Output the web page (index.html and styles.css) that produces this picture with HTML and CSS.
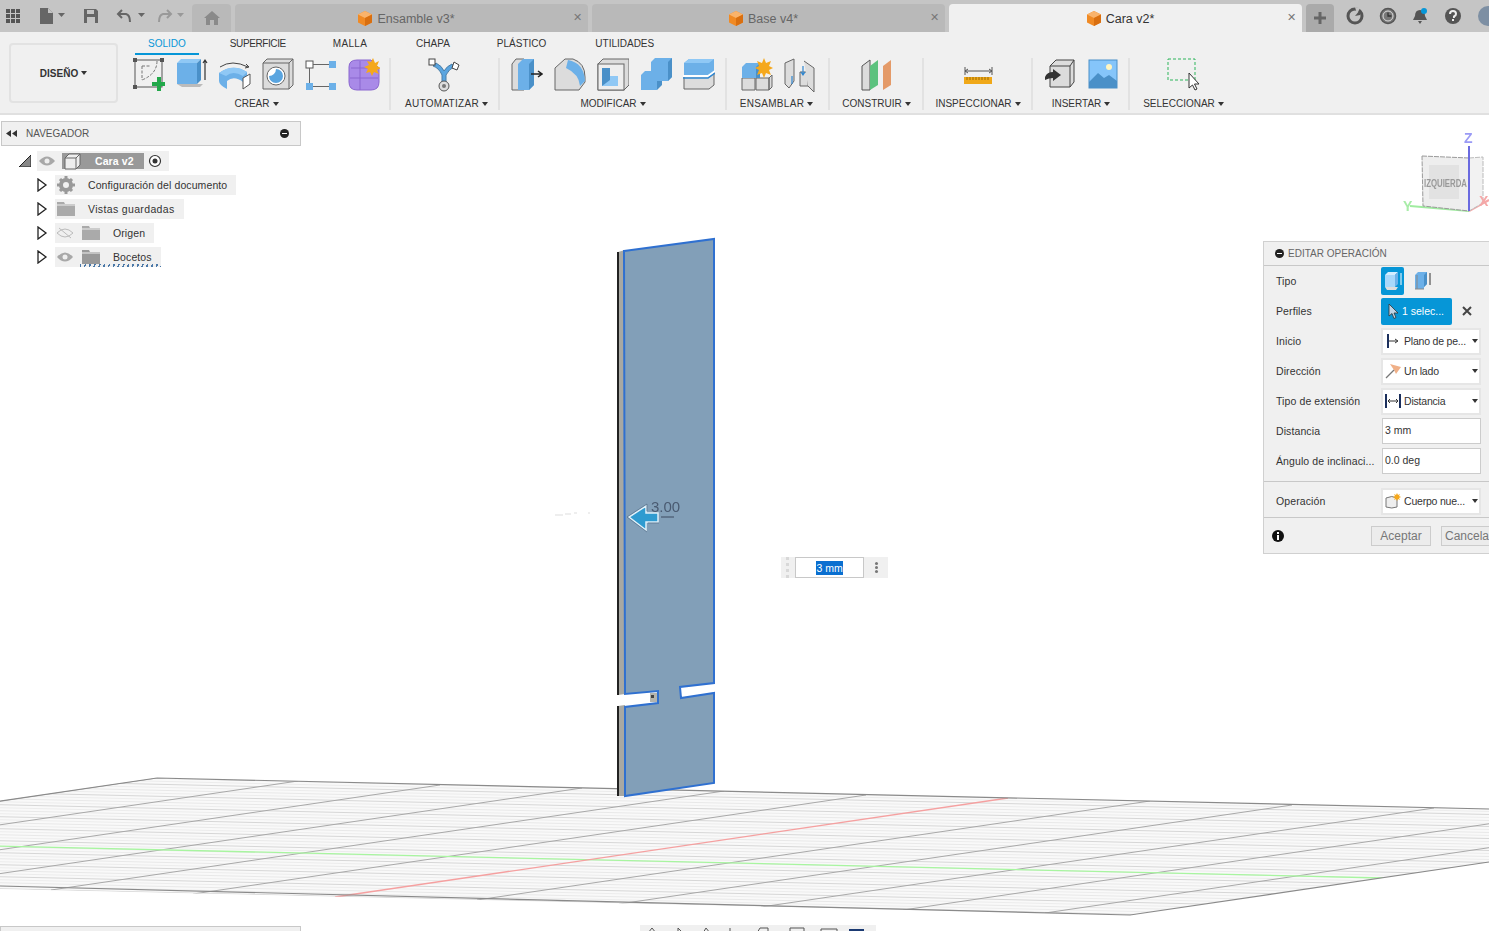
FILE: index.html
```html
<!DOCTYPE html>
<html lang="es">

<head>
    <meta charset="utf-8">
    <meta name="viewport" content="width=device-width, initial-scale=1.0">
    <title>Cara v2</title>
    <link rel="stylesheet" href="styles.css">
</head>

<body>
    <header class="titlebar">
        <div class="quick">
            <svg class="q-grid" width="16" height="16" viewBox="0 0 16 16"><g fill="#555"><rect x="1" y="1" width="4" height="4"/><rect x="6" y="1" width="4" height="4"/><rect x="11" y="1" width="4" height="4"/><rect x="1" y="6" width="4" height="4"/><rect x="6" y="6" width="4" height="4"/><rect x="11" y="6" width="4" height="4"/><rect x="1" y="11" width="4" height="4"/><rect x="6" y="11" width="4" height="4"/><rect x="11" y="11" width="4" height="4"/></g></svg>
            <svg class="q-file" width="28" height="16" viewBox="0 0 28 16"><path d="M1 0h8l5 5v11H1z" fill="#666"/><path d="M9 0v5h5z" fill="#c4c4c4"/><path d="M19 5h7l-3.500 4z" fill="#666"/></svg>
            <svg class="q-save" width="16" height="16" viewBox="0 0 16 16"><path d="M1 1h12l2 2v12H1z" fill="#666"/><rect x="4" y="2" width="7" height="4" fill="#c4c4c4"/><rect x="4" y="9" width="8" height="6" fill="#c4c4c4"/></svg>
            <svg class="q-undo" width="30" height="16" viewBox="0 0 30 16"><path d="M6 2 2 6l4 4M2 6h8q4 1 4 8" fill="none" stroke="#666" stroke-width="2"/><path d="M22 5h7l-3.500 4z" fill="#666"/></svg>
            <svg class="q-redo" width="30" height="16" viewBox="0 0 30 16"><path d="M10 2l4 4-4 4M14 6H6q-4 1-4 8" fill="none" stroke="#999" stroke-width="2"/><path d="M20 5h7l-3.500 4z" fill="#999"/></svg>
        </div>
        <div class="tabs">
            <div class="tab tab-home">
                <svg width="16" height="14" viewBox="0 0 16 14"><path d="M8 0 0 7h2v7h4V9h4v5h4V7h2z" fill="#8a8a8a"/></svg>
            </div>
            <div class="tab tab-doc">
                <span class="tab-name"><svg class="cube" width="14" height="15" viewBox="0 0 14 15"><path d="M7 0l7 3.500v8L7 15 0 11.500v-8z" fill="#f08a24"/><path d="M7 0l7 3.500L7 7 0 3.500z" fill="#f9b36b"/><path d="M7 7v8l7-3.500v-8z" fill="#d96f10"/></svg>Ensamble v3*</span>
                <span class="tab-x">✕</span>
            </div>
            <div class="tab tab-doc">
                <span class="tab-name"><svg class="cube" width="14" height="15" viewBox="0 0 14 15"><path d="M7 0l7 3.500v8L7 15 0 11.500v-8z" fill="#f08a24"/><path d="M7 0l7 3.500L7 7 0 3.500z" fill="#f9b36b"/><path d="M7 7v8l7-3.500v-8z" fill="#d96f10"/></svg>Base v4*</span>
                <span class="tab-x">✕</span>
            </div>
            <div class="tab tab-doc tab-active">
                <span class="tab-name"><svg class="cube" width="14" height="15" viewBox="0 0 14 15"><path d="M7 0l7 3.500v8L7 15 0 11.500v-8z" fill="#f08a24"/><path d="M7 0l7 3.500L7 7 0 3.500z" fill="#f9b36b"/><path d="M7 7v8l7-3.500v-8z" fill="#d96f10"/></svg>Cara v2*</span>
                <span class="tab-x">✕</span>
            </div>
            <div class="tab tab-plus">
                <svg width="12" height="12" viewBox="0 0 12 12"><path d="M6 0v12M0 6h12" stroke="#666" stroke-width="3"/></svg>
            </div>
        </div>
        <div class="account">
            <svg width="18" height="18" viewBox="0 0 18 18"><circle cx="9" cy="9" r="7" fill="none" stroke="#555" stroke-width="3"/><path d="M9 0l5 1-3 6z" fill="#c4c4c4"/><path d="M9 9l5-6v5z" fill="#555"/></svg>
            <svg width="18" height="18" viewBox="0 0 18 18"><circle cx="9" cy="9" r="7.500" fill="#777" stroke="#555" stroke-width="1.500"/><circle cx="9" cy="9" r="5" fill="none" stroke="#ddd"/><path d="M9 5.500V9h3.500" fill="none" stroke="#333" stroke-width="1.300"/></svg>
            <svg width="18" height="18" viewBox="0 0 18 18"><path d="M9 3q-5 0-5 6l-2 4h14l-2-4q0-6-5-6zM7 14h4l-2 3z" fill="#555"/><circle cx="13" cy="4" r="3" fill="#0696d7"/></svg>
            <svg width="18" height="18" viewBox="0 0 18 18"><circle cx="9" cy="9" r="8" fill="#555"/><path d="M6 7q0-3 3-3t3 3q0 1.500-2 2.500V11" fill="none" stroke="#eee" stroke-width="2"/><rect x="8" y="12" width="2" height="2" fill="#eee"/></svg>
            <span class="avatar"></span>
        </div>
    </header>

    <section class="ribbon">
        <div class="design-wrap">
            <div class="design-btn">DISEÑO<i class="caret"></i></div>
        </div>
        <div class="ribbon-main">
            <nav class="rtabs">
                <span class="rtab rtab-on">SOLIDO</span>
                <span class="rtab rtab-sup">SUPERFICIE</span>
                <span class="rtab rtab-malla">MALLA</span>
                <span class="rtab rtab-push">CHAPA</span>
                <span class="rtab">PLÁSTICO</span>
                <span class="rtab rtab-push">UTILIDADES</span>
            </nav>
            <div class="groups">
                <div class="group g-crear">
                    <div class="icons">
                        <svg width="32" height="34" viewBox="0 0 32 34"><rect x="2" y="2" width="27" height="27" fill="none" stroke="#555"/><g fill="#555"><rect x="0" y="0" width="4" height="4"/><rect x="27" y="0" width="4" height="4"/><rect x="0" y="27" width="4" height="4"/></g><path d="M9 8v14M9 8h9M24 3q0 13-15 19" fill="none" stroke="#777" stroke-dasharray="3 1.500"/><path d="M26 19v14M19 26h14" stroke="#22a84a" stroke-width="4"/></svg>
                        <svg width="32" height="34" viewBox="0 0 32 34"><path d="M1 26l5 3h18l3-3z" fill="#bbb"/><rect x="1" y="5" width="20" height="21" fill="#6cb0e8"/><path d="M1 5l4-4h20l-4 4z" fill="#8fc8f5"/><path d="M21 5l4-4v21l-4 4z" fill="#4a90c8"/><path d="M29 22V3M27 5l2-3 2 3" fill="none" stroke="#333" stroke-width="1.200"/></svg>
                        <svg width="32" height="34" viewBox="0 0 32 34"><path d="M0 15Q14 5 28 14V22L24 24Q15 17 8 23V31Q0 27 0 23z" fill="#6cb0e8"/><path d="M0 15Q14 5 28 14L24 18Q14 12 7 18z" fill="#8fc8f5"/><path d="M24 20 31 16V26L24 31z" fill="#fff" stroke="#555"/><path d="M1 9Q13 1 29 9M27 6l3 3-4 1" fill="none" stroke="#444"/></svg>
                        <svg width="32" height="34" viewBox="0 0 32 34"><path d="M1 5l4-4h26v26l-4 4H1z" fill="#dcdcdc" stroke="#666"/><path d="M1 5h26v26M27 5l4-4" fill="none" stroke="#666"/><circle cx="14" cy="18" r="9" fill="#fff" stroke="#666"/><path d="M7 18a7 7 0 1 0 7-7 7 7 0 0 1-7 7z" fill="#5aa5e0"/></svg>
                        <svg width="32" height="34" viewBox="0 0 32 34"><rect x="1" y="3" width="7" height="7" fill="#fff" stroke="#555"/><rect x="24" y="3" width="7" height="7" fill="#6cb0e8"/><rect x="1" y="25" width="7" height="7" fill="#6cb0e8"/><rect x="24" y="25" width="7" height="7" fill="#6cb0e8"/><path d="M8 6.500h16M4.500 10v15M8 28.500h16" stroke="#666"/></svg>
                        <svg width="32" height="34" viewBox="0 0 32 34"><path d="M1 9q0-7 8-7h14l8 8v14q0 8-8 8H9q-8 0-8-8z" fill="#a98ae8" stroke="#8a66cf"/><path d="M12 3v29M2 20h28M3 10h26" stroke="#8a66cf" fill="none"/><path d="M25 0l2 5 4-2-2 5 4 2-4 2 2 4-5-2-2 4-2-4-4 1 2-4-4-2 5-2-2-4 4 1z" fill="#f5a81c"/></svg>
                    </div>
                    <span class="group-label">CREAR<i class="caret"></i></span>
                </div>
                <div class="group g-auto">
                    <div class="icons">
                        <svg width="34" height="34" viewBox="0 0 34 34"><path d="M5 8q6 2 9 9v8h4v-8q3-6 8-8l-2-3q-5 2-8 7-2-5-8-8z" fill="#5aa5e0" stroke="#4a7ea8"/><rect x="1" y="1" width="6" height="6" fill="#fff" stroke="#444"/><path d="M26 4l5 3-2 5-5-2z" fill="#fff" stroke="#444"/><circle cx="16" cy="28" r="5" fill="#ddd" stroke="#555"/><circle cx="16" cy="28" r="2" fill="#777"/></svg>
                    </div>
                    <span class="group-label label-auto">AUTOMATIZAR<i class="caret"></i></span>
                </div>
                <div class="group g-mod">
                    <div class="icons">
                        <svg width="32" height="34" viewBox="0 0 32 34"><path d="M1 6l4-5h8v31H1z" fill="#dcdcdc" stroke="#666"/><path d="M7 6l5-5h11v26l-5 5H7z" fill="#6cb0e8"/><path d="M18 6l5-5v26l-5 5z" fill="#4a90c8"/><path d="M20 16h10M27 13l4 3-4 3" fill="none" stroke="#222" stroke-width="1.500"/></svg>
                        <svg width="32" height="34" viewBox="0 0 32 34"><path d="M1 10l10-9h8q12 4 12 18v5l-6 8H1z" fill="#dcdcdc" stroke="#666"/><path d="M14 2q16 3 17 21l-5 5q-1-12-14-18z" fill="#6cb0e8"/></svg>
                        <svg width="32" height="34" viewBox="0 0 32 34"><path d="M1 6l5-5h26v26l-5 5H1z" fill="#dcdcdc" stroke="#666"/><rect x="1" y="6" width="26" height="26" fill="#eee" stroke="#666"/><path d="M5 10h8v8h8v10H5z" fill="#8fc8f5"/><path d="M5 10h8v12l-8 6z" fill="#4a90c8"/></svg>
                        <svg width="32" height="34" viewBox="0 0 32 34"><path d="M1 17l4-4h12v19H1z" fill="#6cb0e8"/><path d="M11 4l4-4h17v19l-4 4H11z" fill="#6cb0e8"/><path d="M28 4l4-4v19l-4 4z" fill="#4a90c8"/><path d="M17 23h5v4l-5 5z" fill="#4a90c8"/></svg>
                        <svg width="32" height="34" viewBox="0 0 32 34"><path d="M1 17h25l5-4v14l-5 4H1z" fill="#dcdcdc" stroke="#666"/><path d="M1 5l5-4h25v14l-5 4H1z" fill="#6cb0e8"/><path d="M1 5l5-4h25l-5 4z" fill="#8fc8f5"/><path d="M0 18h25l7-5" fill="none" stroke="#fff" stroke-width="2"/><path d="M0 20h25l7-5" fill="none" stroke="#2f86d0" stroke-width="1.500"/></svg>
                    </div>
                    <span class="group-label">MODIFICAR<i class="caret"></i></span>
                </div>
                <div class="group g-ens">
                    <div class="icons">
                        <svg width="32" height="34" viewBox="0 0 32 34"><path d="M1 20h13v12H1zM15 20h13v12H15zM28 20l3-3v12l-3 3z" fill="#dcdcdc" stroke="#666"/><path d="M1 9l4-4h14v15H1z" fill="#6cb0e8"/><path d="M15 9l4-4v15h-4z" fill="#4a90c8"/><path d="M23 0l2 5 5-2-2 5 4 2-4 2 2 5-5-2-2 5-2-5-5 2 2-5-4-2 4-2-2-5 5 2z" fill="#f5a81c"/></svg>
                        <svg width="32" height="34" viewBox="0 0 32 34"><path d="M1 5l9-4v22l-5 7-4-4zM16 14h8v14h-8z" fill="#dcdcdc" stroke="#666"/><path d="M20 3l10 7v24l-6-6" fill="#dcdcdc" stroke="#666"/><path d="M8 18v8M19 8v8M17 14l2 3 2-3" fill="none" stroke="#2f86d0" stroke-width="1.200"/></svg>
                    </div>
                    <span class="group-label label-ens">ENSAMBLAR<i class="caret"></i></span>
                </div>
                <div class="group g-cons">
                    <div class="icons">
                        <svg width="32" height="34" viewBox="0 0 32 34"><path d="M1 8l8-6v30H1z" fill="#dcdcdc" stroke="#555"/><path d="M9 8l8-6v25l-8 5z" fill="#5cc27e"/><path d="M22 8l8-6v25l-8 5z" fill="#e49a68"/></svg>
                    </div>
                    <span class="group-label">CONSTRUIR<i class="caret"></i></span>
                </div>
                <div class="group g-insp">
                    <div class="icons">
                        <svg width="32" height="34" viewBox="0 0 32 34"><path d="M3 9v8M30 9v8M3 13h27M6 11l-3 2 3 2M27 11l3 2-3 2" fill="none" stroke="#555"/><rect x="2" y="19" width="28" height="7" fill="#f0a818"/><path d="M5 19v3M8 19v3M11 19v3M14 19v3M17 19v3M20 19v3M23 19v3M26 19v3" stroke="#9a6a00"/></svg>
                    </div>
                    <span class="group-label">INSPECCIONAR<i class="caret"></i></span>
                </div>
                <div class="group g-ins">
                    <div class="icons">
                        <svg width="32" height="34" viewBox="0 0 32 34"><path d="M6 8l6-6h18v22l-4 5H6z" fill="#dcdcdc" stroke="#444"/><path d="M6 8h20v21M26 8l4-6" fill="none" stroke="#444"/><path d="M1 19q2-5 8-5v-3l8 6-8 6v-3q-4 0-8 2z" fill="#333"/></svg>
                        <svg width="32" height="34" viewBox="0 0 32 34"><rect x="2" y="2" width="28" height="28" fill="#85c5fa" stroke="#4a90c8"/><path d="M2 24l9-9 6 5 5-3 8 6v7H2z" fill="#4a90c8"/><circle cx="22" cy="9" r="3" fill="#fff5c0"/></svg>
                    </div>
                    <span class="group-label">INSERTAR<i class="caret"></i></span>
                </div>
                <div class="group g-sel">
                    <div class="icons">
                        <svg width="34" height="34" viewBox="0 0 34 34"><rect x="1" y="1" width="27" height="21" fill="none" stroke="#2db55a" stroke-dasharray="3 2"/><path d="M22 15v15l3.500-3 2.500 5 2-1-2.500-5h4.500z" fill="#fff" stroke="#333"/></svg>
                    </div>
                    <span class="group-label">SELECCIONAR<i class="caret"></i></span>
                </div>
            </div>
        </div>
    </section>

    <main class="viewport">
        <svg class="scene" width="1489" height="816" viewBox="0 115 1489 816">
            <defs>
                <pattern id="hatch" width="60" height="12" patternUnits="userSpaceOnUse" patternTransform="rotate(1.300)">
                    <rect width="60" height="12" fill="#f9f9f9"/>
                    <rect width="60" height="1" fill="#d6d6d6"/>
                    <rect y="3" width="60" height="1" fill="#ececec"/>
                    <rect y="6" width="60" height="1" fill="#e8e8e8"/>
                    <rect y="9" width="60" height="1" fill="#ececec"/>
                </pattern>
                <clipPath id="plane"><path d="M157 778 1803 816 1130 915-516 877z"/></clipPath>
            </defs>
            <path d="M157 778 1803 816 1130 915-516 877z" fill="url(#hatch)"/>
            <g clip-path="url(#plane)" fill="none">
                <path d="M156 778-517 877M298 781-375 880M440 785-233 884M582 788-91 887M724 791 51 890M866 795 193 894M1150 801 477 900M1292 805 619 904M1434 808 761 907M1576 811 903 910M1718 814 1045 913" stroke="#a8a8a8"/>
                <path d="M-263 840 1383 878" stroke="#a8f5a0" stroke-width="1.300"/>
                <path d="M1008 798 335 897" stroke="#f5a0a0" stroke-width="1.300"/>
            </g>
            <path d="M157 778 1489 809M-516 877 157 778M0 886 1130 915 1489 862" fill="none" stroke="#8a8a8a" stroke-width="1.200"/>

            <!-- pieza -->
            <path d="M618 252 625 250V694L618 695zM618 706 625 705V796H618z" fill="#a8a8a2"/>
            <path d="M618 252V695M618 706V796" stroke="#222" stroke-width="2"/>
            <path d="M624 251 714 239V683L680 687 681 698 714 693V783L625 796V707L658 703V691L625 694z" fill="#829fb8" stroke="#2f70d0" stroke-width="2"/>
            <rect x="650" y="693" width="7" height="9" fill="#b4b4ae"/>
            <rect x="651" y="695" width="3" height="3" fill="#444"/>

            <!-- manipulador -->
            <text class="dim" x="651" y="512">3.00</text>
            <path d="M661 517h13" stroke="#3c4a60"/>
            <path d="M629 517 646 506V513H658V522H646V530z" fill="#2f9bd0" stroke="#dff1fa" stroke-width="1.500"/>
            <path d="M627 517 647 504V511" fill="none" stroke="#56708a" stroke-width=".7"/>
            <path d="M647 532 627 517M659 523H648" fill="none" stroke="#56708a" stroke-width=".7"/>
            <path d="M555 515h8M565 514h6M574 513h3M588 513h2" stroke="#ddd"/>

            <!-- cubo de vista -->
            <g class="blurred">
                <path d="M1410 206 1469 211" stroke="#a0eca0" stroke-width="2"/>
                <path d="M1469 211 1489 200" stroke="#f5a8a8" stroke-width="2"/>
                <path d="M1469 158 1483 157V203L1469 211z" fill="#f2f2f2" stroke="#bbb" stroke-dasharray="5 1"/>
                <path d="M1422 156 1469 158V211L1423 206z" fill="#eeeeee" stroke="#999" stroke-dasharray="5 1"/>
                <rect x="1429" y="165" width="30" height="34" fill="#e2e2e2"/>
                <text class="cube-label" x="1424" y="187" textLength="43" lengthAdjust="spacingAndGlyphs">IZQUIERDA</text>
                <path d="M1469 146V211" stroke="#6a6ae0" stroke-width="2"/>
                <text class="axis axis-z" x="1464" y="143">Z</text>
                <text class="axis axis-y" x="1403" y="211">Y</text>
                <text class="axis axis-x" x="1479" y="206">X</text>
            </g>
        </svg>

        <aside class="navpanel">
            <div class="nav-head">
                <svg width="12" height="7" viewBox="0 0 12 7"><path d="M5 0v7L0 3.500zM11 0v7L6 3.500z" fill="#333"/></svg>
                <span class="nav-title">NAVEGADOR</span>
                <span class="minus"></span>
            </div>
            <ul class="tree">
                <li class="tree-row">
                    <svg class="twist-root" width="12" height="12" viewBox="0 0 12 12"><path d="M0 12 12 0v12z" fill="#888"/><path d="M0 12 12 0v12z" fill="none" stroke="#222"/></svg>
                    <div class="node node-root">
                        <svg class="eye" width="16" height="10" viewBox="0 0 16 10"><path d="M0 5q8-9 16 0-8 9-16 0z" fill="#a8a8a8"/><circle cx="8" cy="5" r="2.500" fill="#eee"/></svg>
                        <span class="root-name">
                            <svg width="17" height="17" viewBox="0 0 17 17"><path d="M1 5l4-4h11v11l-4 4H1z" fill="#eee" stroke="#666"/><path d="M1 5h11v11M12 5l4-4" fill="none" stroke="#666"/></svg>
                            <b>Cara v2</b>
                        </span>
                        <svg class="radio" width="14" height="14" viewBox="0 0 14 14"><circle cx="7" cy="7" r="5.500" fill="#fff" stroke="#333" stroke-width="1.200"/><circle cx="7" cy="7" r="2.500" fill="#333"/></svg>
                    </div>
                </li>
                <li class="tree-row">
                    <svg class="twist" width="11" height="14" viewBox="0 0 11 14"><path d="M1 1v12l8-6z" fill="#fff" stroke="#222" stroke-width="1.300"/></svg>
                    <div class="node">
                        <svg class="gear" width="18" height="18" viewBox="0 0 18 18"><circle cx="9" cy="9" r="5" fill="none" stroke="#999" stroke-width="4"/><path d="M9 0v18M0 9h18M3 3l12 12M15 3 3 15" stroke="#999" stroke-width="3" stroke-dasharray="3 12"/></svg>
                        <span class="node-text">Configuración del documento</span>
                    </div>
                </li>
                <li class="tree-row">
                    <svg class="twist" width="11" height="14" viewBox="0 0 11 14"><path d="M1 1v12l8-6z" fill="#fff" stroke="#222" stroke-width="1.300"/></svg>
                    <div class="node">
                        <svg class="folder" width="18" height="14" viewBox="0 0 18 14"><path d="M0 0h7l1 2h10v12H0z" fill="#aaa"/><path d="M0 3h18" stroke="#eee"/></svg>
                        <span class="node-text node-vistas">Vistas guardadas</span>
                    </div>
                </li>
                <li class="tree-row">
                    <svg class="twist" width="11" height="14" viewBox="0 0 11 14"><path d="M1 1v12l8-6z" fill="#fff" stroke="#222" stroke-width="1.300"/></svg>
                    <div class="node">
                        <svg class="eye" width="16" height="12" viewBox="0 0 16 12"><path d="M0 6q8-8 16 0-8 8-16 0z" fill="none" stroke="#bbb"/><path d="M2 1l12 10" stroke="#bbb"/></svg>
                        <svg class="folder folder-eye" width="18" height="14" viewBox="0 0 18 14"><path d="M0 0h7l1 2h10v12H0z" fill="#aaa"/><path d="M0 3h18" stroke="#eee"/></svg>
                        <span class="node-text">Origen</span>
                    </div>
                </li>
                <li class="tree-row">
                    <svg class="twist" width="11" height="14" viewBox="0 0 11 14"><path d="M1 1v12l8-6z" fill="#fff" stroke="#222" stroke-width="1.300"/></svg>
                    <div class="node node-sketch">
                        <svg class="eye" width="16" height="10" viewBox="0 0 16 10"><path d="M0 5q8-9 16 0-8 9-16 0z" fill="#a8a8a8"/><circle cx="8" cy="5" r="2.500" fill="#eee"/></svg>
                        <svg class="folder folder-eye" width="18" height="14" viewBox="0 0 18 14"><path d="M0 0h7l1 2h10v12H0z" fill="#999"/><path d="M0 3h18" stroke="#eee"/></svg>
                        <span class="node-text">Bocetos</span>
                        <span class="sketch-line"></span>
                    </div>
                </li>
            </ul>
        </aside>
        <div class="nav-bottom"></div>

        <div class="quickinput">
            <span class="grip"></span>
            <span class="qi-box"><span class="qi-sel">3 mm</span></span>
            <span class="qi-dots"></span>
        </div>

        <aside class="oppanel">
            <div class="op-head"><span class="minus"></span>EDITAR OPERACIÓN</div>
            <div class="op-row">
                <label>Tipo</label>
                <div class="op-type">
                    <span class="type-btn type-on"><svg width="18" height="20" viewBox="0 0 18 20"><path d="M1 16l2 3h9l2-3z" fill="#ddd"/><rect x="1" y="4" width="10" height="12" fill="#a8d8fb"/><path d="M1 4l3-3h10l-3 3z" fill="#d3edff"/><path d="M11 4l3-3v12l-3 3z" fill="#6cb0e8"/><path d="M17 14V2" stroke="#fff"/></svg></span>
                    <span class="type-btn"><svg width="18" height="20" viewBox="0 0 18 20"><path d="M2 4l3-3h9v12l-3 3v2H2z" fill="#6cb0e8"/><path d="M11 4l3-3v12l-3 3z" fill="#4a90c8"/><path d="M4 4v14M2 18h9" stroke="#888"/><path d="M17 14V2" stroke="#333"/></svg></span>
                </div>
            </div>
            <div class="op-row">
                <label>Perfiles</label>
                <span class="sel-btn"><svg width="11" height="15" viewBox="0 0 11 15"><path d="M1 0v12l3-2.500 2 5 2-1-2-4.500h4z" fill="#bfd4e6" stroke="#333" stroke-width=".8"/></svg>1 selec...</span>
                <svg class="clear-x" width="10" height="10" viewBox="0 0 10 10"><path d="M1 1l8 8M9 1 1 9" stroke="#444" stroke-width="2"/></svg>
            </div>
            <div class="op-row">
                <label>Inicio</label>
                <div class="op-select">
                    <svg width="16" height="16" viewBox="0 0 16 16"><path d="M3 1v14" stroke="#1b2f5c" stroke-width="2"/><path d="M4 8h8M10 6l3 2-3 2" fill="none" stroke="#333"/></svg>
                    <span class="op-value">Plano de pe...</span><i class="caret"></i>
                </div>
            </div>
            <div class="op-row">
                <label>Dirección</label>
                <div class="op-select">
                    <svg width="16" height="16" viewBox="0 0 16 16"><path d="M5 1l11 3-5 7-2-4z" fill="#f0b088"/><path d="M1 15 9 7" stroke="#777" stroke-width="1.300"/></svg>
                    <span class="op-value">Un lado</span><i class="caret"></i>
                </div>
            </div>
            <div class="op-row">
                <label>Tipo de extensión</label>
                <div class="op-select">
                    <svg width="16" height="16" viewBox="0 0 16 16"><path d="M1 1v14M15 1v14" stroke="#1b2f5c" stroke-width="2"/><path d="M3 8h10M5 6 3 8l2 2M11 6l2 2-2 2" fill="none" stroke="#333"/></svg>
                    <span class="op-value">Distancia</span><i class="caret"></i>
                </div>
            </div>
            <div class="op-row">
                <label>Distancia</label>
                <span class="op-input">3 mm</span>
            </div>
            <div class="op-row">
                <label>Ángulo de inclinaci...</label>
                <span class="op-input">0.0 deg</span>
            </div>
            <div class="op-sep"></div>
            <div class="op-row">
                <label>Operación</label>
                <div class="op-select">
                    <svg width="16" height="16" viewBox="0 0 16 16"><path d="M1 5q6-3 11 0v9q-5 2-11 0z" fill="#eee" stroke="#777"/><path d="M12 0l1 2 2-1-1 2 2 1-2 1 1 2-2-1-1 2-1-2-2 1 1-2-2-1 2-1-1-2 2 1z" fill="#f5a81c"/></svg>
                    <span class="op-value">Cuerpo nue...</span><i class="caret"></i>
                </div>
            </div>
            <div class="op-foot">
                <svg class="info" width="12" height="12" viewBox="0 0 12 12"><circle cx="6" cy="6" r="6" fill="#111"/><rect x="5" y="5" width="2" height="5" fill="#fff"/><rect x="5" y="2" width="2" height="2" fill="#fff"/></svg>
                <button class="op-btn">Aceptar</button>
                <button class="op-btn op-cancel">Cancelar</button>
            </div>
        </aside>

        <div class="viewbar">
            <svg width="236" height="6" viewBox="0 0 236 6"><path d="M8 6l4-5 4 5M38 6V1l5 5M63 6l3-5 4 5M90 6V1M117 6l3-5h8v5M150 6V1h14v5M181 2h16M181 6V2M197 6V2" fill="none" stroke="#555"/><rect x="209" y="2" width="15" height="4" fill="#1b3a73"/></svg>
        </div>
    </main>
</body>

</html>
```

FILE: styles.css
```css
html,
body {
    margin: 0;
    padding: 0;
    height: 100%;
    overflow: hidden;
    background-color: #fff;
    font-family: "Liberation Sans", Arial, sans-serif;
    font-size: 10px;
    color: #333;
}

svg {
    display: block;
    flex: none;
}

ul {
    list-style: none;
    margin: 0;
    padding: 0;
}

.caret {
    display: inline-block;
    width: 0;
    height: 0;
    margin-left: 3px;
    vertical-align: 1px;
    border-left: 3px solid transparent;
    border-right: 3px solid transparent;
    border-top: 4px solid #333;
}

/* top bar */

.titlebar {
    display: flex;
    height: 32px;
    background-color: #c5c5c5;
}

.quick {
    display: flex;
    align-items: center;
    width: 192px;
    height: 32px;
    padding-bottom: 1px;
    box-sizing: border-box;
}

.q-grid {
    margin-left: 5px;
}

.q-file {
    margin-left: 18px;
}

.q-save {
    margin-left: 16px;
}

.q-undo {
    margin-left: 17px;
}

.q-redo {
    margin-left: 11px;
}

.tabs {
    display: flex;
    gap: 4px;
    align-self: flex-end;
    height: 28px;
}

.tab {
    display: flex;
    align-items: center;
    justify-content: center;
    position: relative;
    background-color: #b9b9b9;
    border-radius: 4px 4px 0 0;
    box-sizing: border-box;
}

.tab-home {
    width: 39px;
}

.tab-doc {
    width: 353px;
    padding-right: 10px;
    font-size: 12.500px;
    color: #666;
}

.tab-active {
    background-color: #f0f0f0;
    color: #333;
}

.tab-plus {
    width: 28px;
    background-color: #aaa;
}

.tab-name {
    display: flex;
    align-items: center;
    gap: 5px;
    margin-top: 1px;
}

.tab-x {
    position: absolute;
    right: 6px;
    top: 7px;
    font-size: 11px;
    color: #777;
}

.account {
    display: flex;
    align-items: center;
    gap: 14.600px;
    margin-left: 12px;
    height: 32px;
}

.avatar {
    display: block;
    width: 20px;
    height: 20px;
    margin-left: 2px;
    margin-right: -20px;
    border-radius: 50%;
    background-color: #7d8fa3;
}

/* ribbon */

.ribbon {
    display: flex;
    height: 83px;
    box-sizing: border-box;
    background-color: #f0f0f0;
    border-bottom: 2px solid #e0e0e0;
}

.design-wrap {
    width: 128px;
    flex: none;
}

.design-btn {
    display: flex;
    align-items: center;
    justify-content: center;
    width: 109px;
    height: 60px;
    margin: 11px 0 0 9px;
    box-sizing: border-box;
    border: 2px solid #e2e2e2;
    border-radius: 4px;
    font-weight: bold;
    color: #333;
}

.ribbon-main {
    flex: 1;
}

.rtabs {
    display: flex;
    gap: 21px;
    height: 26px;
    margin-left: 7px;
    box-sizing: border-box;
}

.rtab {
    height: 23px;
    padding: 6px 13px 0;
    box-sizing: border-box;
    line-height: 11px;
    color: #333;
}

.rtab-on {
    color: #0696d7;
    border-bottom: 2px solid #0696d7;
}

.rtab-sup {
    margin-left: -3px;
    letter-spacing: -.4px;
}

.rtab-malla {
    letter-spacing: .3px;
}

.rtab-push {
    margin-left: 2px;
}

.groups {
    display: flex;
}

.group {
    display: flex;
    flex-direction: column;
    align-items: center;
    height: 52px;
    box-sizing: border-box;
    border-right: 2px solid #e2e2e2;
    margin-right: 1px;
}

.group-label {
    margin-top: 6px;
    line-height: 12px;
    white-space: nowrap;
    color: #333;
}

.label-auto {
    margin-left: 3px;
    letter-spacing: .3px;
}

.label-ens {
    margin-right: 3px;
    letter-spacing: .3px;
}

.icons {
    display: flex;
    gap: 11px;
    height: 34px;
}

.g-crear {
    width: 263px;
    padding-right: 4px;
}

.g-auto {
    width: 108px;
}

.g-mod {
    width: 226px;
}

.g-ens {
    width: 102px;
}

.g-cons {
    width: 93px;
}

.g-insp {
    width: 108px;
}

.g-ins {
    width: 96px;
}

.g-sel {
    width: 105px;
    border-right: 0;
}

/* 3d view */

.viewport {
    position: relative;
    height: 816px;
    overflow: hidden;
}

.scene {
    position: absolute;
    left: 0;
    top: 0;
}

.dim {
    font-size: 15px;
    fill: #3c4a60;
    opacity: .8;
}

.blurred {
    filter: blur(.4px);
}

.cube-label {
    font-size: 10px;
    font-weight: bold;
    fill: #999;
}

.axis {
    font-size: 14px;
    font-weight: bold;
}

.axis-z {
    fill: #9a9af5;
}

.axis-y {
    fill: #a8eca8;
}

.axis-x {
    fill: #f5a8a8;
}

/* navigator */

.navpanel {
    position: absolute;
    left: 1px;
    top: 6px;
    width: 300px;
}

.nav-head {
    display: flex;
    align-items: center;
    height: 25px;
    padding: 0 11px 0 4px;
    box-sizing: border-box;
    background-color: #f0f0f0;
    border: 1px solid #c8c8c8;
}

.nav-title {
    flex: 1;
    margin-left: 8px;
    color: #555;
}

.minus {
    display: block;
    position: relative;
    width: 9px;
    height: 9px;
    border-radius: 50%;
    background-color: #222;
}

.minus::after {
    content: "";
    position: absolute;
    left: 2px;
    top: 4px;
    width: 5px;
    height: 1px;
    background-color: #fff;
}

.tree {
    margin-top: 3px;
}

.tree-row {
    display: flex;
    align-items: center;
    height: 24px;
    padding-left: 36px;
}

.twist {
    margin-right: 7px;
}

.twist-root {
    margin: 0 6px 0 -18px;
}

.node {
    display: flex;
    align-items: center;
    position: relative;
    height: 20px;
    padding: 0 9px 0 2px;
    background-color: #f0f0f0;
}

.node-root {
    padding: 0 7px 0 2px;
}

.node-text {
    margin-left: 13px;
    font-size: 10.500px;
    letter-spacing: .1px;
}

.node-vistas {
    letter-spacing: .35px;
}

.folder-eye {
    margin-left: 9px;
}

.root-name {
    display: flex;
    align-items: center;
    gap: 14px;
    width: 82px;
    height: 16px;
    margin-left: 7px;
    padding-left: 2px;
    box-sizing: border-box;
    background-color: #999;
    color: #fff;
    font-size: 10.500px;
    letter-spacing: .1px;
}

.radio {
    margin-left: 4px;
}

.sketch-line {
    position: absolute;
    left: 25px;
    right: 0;
    bottom: 0;
    height: 3px;
    background-image: repeating-linear-gradient(110deg, #4a78a8 0, #4a78a8 1.500px, transparent 1.500px, transparent 4.500px);
}

.nav-bottom {
    position: absolute;
    left: 0;
    bottom: 0;
    width: 301px;
    height: 5px;
    background-color: #f0f0f0;
    border: 1px solid #c8c8c8;
    border-bottom: 0;
    box-sizing: border-box;
}

.viewbar {
    position: absolute;
    left: 640px;
    bottom: 0;
    width: 236px;
    height: 6px;
    overflow: hidden;
    background-color: #f0f0f0;
}

.viewbar svg {
    margin-top: 2px;
}

/* input at the cursor */

.quickinput {
    position: absolute;
    left: 781px;
    top: 442px;
    display: flex;
    align-items: center;
    width: 107px;
    height: 21px;
    background-color: #f0f0f0;
}

.grip {
    width: 9px;
    height: 100%;
    box-sizing: border-box;
    border-left: 3px dotted #d8d8d8;
    margin-left: 5px;
}

.qi-box {
    display: flex;
    justify-content: center;
    align-items: center;
    width: 69px;
    height: 21px;
    box-sizing: border-box;
    background-color: #fff;
    border: 1px solid #c8c8c8;
}

.qi-sel {
    background-color: #0a6fd0;
    color: #fff;
    font-size: 10.500px;
    line-height: 14px;
    white-space: nowrap;
}

.qi-dots {
    width: 3px;
    height: 3px;
    margin-left: 11px;
    border-radius: 50%;
    background-color: #777;
    box-shadow: 0 -4px 0 #777, 0 4px 0 #777;
}

/* feature dialog */

.oppanel {
    position: absolute;
    left: 1263px;
    top: 126px;
    width: 240px;
    height: 313px;
    box-sizing: border-box;
    background-color: #f0f0f0;
    border: 1px solid #d0d0d0;
}

.op-head {
    display: flex;
    align-items: center;
    gap: 4px;
    height: 24px;
    padding-left: 11px;
    box-sizing: border-box;
    border-bottom: 1px solid #c8c8c8;
    color: #666;
}

.op-row {
    display: flex;
    align-items: center;
    height: 30px;
    padding-left: 12px;
}

.op-row label {
    width: 105px;
    flex: none;
    font-size: 10.500px;
    letter-spacing: .1px;
    white-space: nowrap;
}

.op-type {
    display: flex;
    gap: 6px;
}

.type-btn {
    display: flex;
    align-items: center;
    justify-content: center;
    width: 23px;
    height: 28px;
    border-radius: 2px;
}

.type-on {
    background-color: #0696d7;
}

.sel-btn {
    display: flex;
    align-items: center;
    gap: 3px;
    width: 71px;
    height: 27px;
    padding-left: 7px;
    box-sizing: border-box;
    border-radius: 2px;
    background-color: #0696d7;
    color: #fff;
    font-size: 10.500px;
}

.clear-x {
    margin-left: 10px;
}

.op-select {
    display: flex;
    align-items: center;
    gap: 3px;
    width: 100px;
    height: 27px;
    padding: 0 3px 0 2px;
    box-sizing: border-box;
    background-color: #fff;
    border: 2px solid #e6e6e6;
    font-size: 10.500px;
}

.op-value {
    width: 62px;
    flex: none;
    letter-spacing: -.2px;
    white-space: nowrap;
}

.op-input {
    width: 99px;
    height: 26px;
    margin-left: 1px;
    padding: 5px 0 0 2px;
    box-sizing: border-box;
    background-color: #fff;
    border: 1px solid #ccc;
    font-size: 10.500px;
}

.op-sep {
    height: 1px;
    margin: 5px 0 4px;
    background-color: #c8c8c8;
}

.op-foot {
    display: flex;
    align-items: center;
    height: 36px;
    margin-top: 1px;
    border-top: 1px solid #c8c8c8;
    padding-left: 8px;
}

.info {
    margin-right: 87px;
}

.op-btn {
    flex: none;
    width: 60px;
    height: 20px;
    margin: 0 10px 0 0;
    padding: 0;
    border: 1px solid #ccc;
    background-color: #ececec;
    font: 12px "Liberation Sans", Arial, sans-serif;
    color: #777;
}

.op-cancel {
    width: 56px;
}
```
